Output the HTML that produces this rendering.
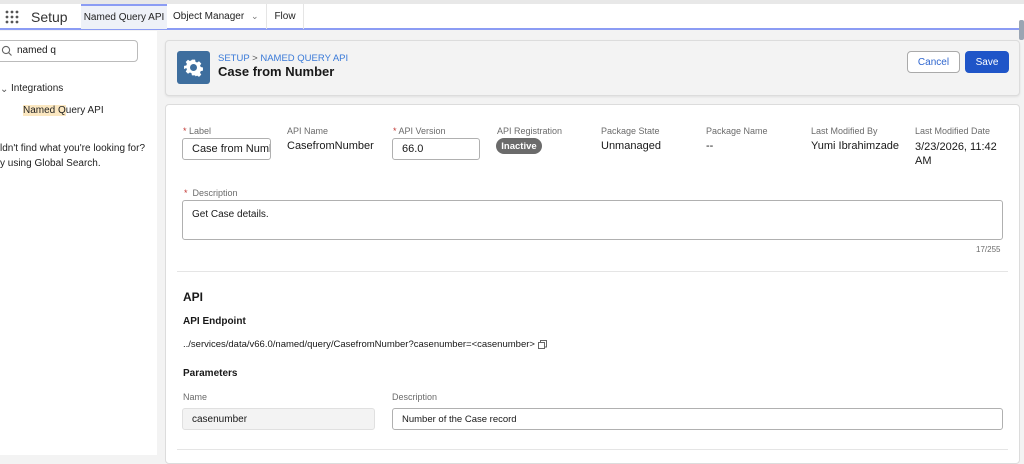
<!DOCTYPE html>
<html><head><meta charset="utf-8"><style>
*{box-sizing:border-box;margin:0;padding:0}
body{width:1024px;height:455px;overflow:hidden;background:#f3f3f3;font-family:"Liberation Sans",Arial,sans-serif;color:#181818;position:relative}
.abs{position:absolute}
.lbl{font-size:9px;color:#6b6b6b;position:absolute}
.val{font-size:11px;position:absolute;color:#181818}
.inp{position:absolute;border:1px solid #b0b0b0;border-radius:3px;background:#fff;font-size:11px;padding-left:9px;display:flex;align-items:center;white-space:nowrap;overflow:hidden}
.req{color:#c23934}
.c{display:flex;align-items:center;justify-content:center}
</style></head><body>
<div class="abs" style="left:0;top:0;width:1024px;height:4px;background:#e8e8e8"></div>
<div class="abs" style="left:0;top:4px;width:1024px;height:26px;background:#fff;border-bottom:2px solid #8b9cf4"></div>
<svg class="abs" style="left:5px;top:10px" width="14" height="14"><g fill="#555"><circle cx="2" cy="2" r="1.4"/><circle cx="7" cy="2" r="1.4"/><circle cx="12" cy="2" r="1.4"/><circle cx="2" cy="7" r="1.4"/><circle cx="7" cy="7" r="1.4"/><circle cx="12" cy="7" r="1.4"/><circle cx="2" cy="12" r="1.4"/><circle cx="7" cy="12" r="1.4"/><circle cx="12" cy="12" r="1.4"/></g></svg>
<div class="abs" style="left:31px;top:9px;font-size:14px;color:#333">Setup</div>
<div class="abs c" style="left:81px;top:4px;width:86px;height:25px;background:#eef1f8;border-top:2px solid #8b9cf4;font-size:10px;color:#222">Named Query API</div>
<div class="abs" style="left:167px;top:4px;width:100px;height:25px;border-right:1px solid #e5e5e5;font-size:10px;padding-left:6px;line-height:25px;color:#222">Object Manager <span style="color:#777;font-size:9px;margin-left:4px">&#8964;</span></div>
<div class="abs c" style="left:267px;top:4px;width:37px;height:25px;border-right:1px solid #e5e5e5;font-size:10px;color:#222">Flow</div>
<div class="abs" style="left:1019px;top:20px;width:5px;height:20px;background:#9aa5b3;border-radius:2px"></div>
<!-- sidebar -->
<div class="abs" style="left:0;top:31px;width:157px;height:424px;background:#fff"></div>
<div class="abs" style="left:-4px;top:40px;width:142px;height:22px;border:1px solid #bbb;border-radius:4px;background:#fff"></div>
<svg class="abs" style="left:1px;top:45px" width="11" height="11"><circle cx="5" cy="5" r="3.6" fill="none" stroke="#666" stroke-width="1.1"/><line x1="7.6" y1="7.6" x2="10.5" y2="10.5" stroke="#666" stroke-width="1.1"/></svg>
<div class="abs" style="left:17px;top:45px;font-size:10px">named q</div>
<div class="abs" style="left:0;top:84px;font-size:10px;color:#555">&#8964;</div>
<div class="abs" style="left:11px;top:83px;font-size:10px;color:#222">Integrations</div>
<div class="abs" style="left:23px;top:105px;font-size:10px;color:#222"><span style="background:#fbe7c0">Named Q</span>uery API</div>
<div class="abs" style="left:0;top:141px;font-size:10px;line-height:15px;color:#222;white-space:nowrap">ldn't find what you're looking for?<br>y using Global Search.</div>
<!-- header card -->
<div class="abs" style="left:165px;top:40px;width:855px;height:56px;background:#f3f3f3;border:1px solid #dcdcdc;border-radius:4px;box-shadow:0 1px 2px rgba(0,0,0,.08)"></div>
<div class="abs" style="left:177px;top:51px;width:33px;height:33px;background:#3e6e9e;border-radius:3px"></div>
<svg class="abs" style="left:183px;top:57px" width="21" height="21" viewBox="0 0 24 24"><path fill="#fff" d="M10 2h4l.6 2.8 2 .9 2.4-1.6 2.9 2.9-1.6 2.4.9 2 2.8.6v4l-2.8.6-.9 2 1.6 2.4-2.9 2.9-2.4-1.6-2 .9L14 22h-4l-.6-2.8-2-.9-2.4 1.6-2.9-2.9 1.6-2.4-.9-2L0 14v-4l2.8-.6.9-2L2.1 5l2.9-2.9 2.4 1.6 2-.9z" transform="translate(1.2 1.2) scale(.9)"/><circle cx="12" cy="12" r="4" fill="#3e6e9e"/></svg>
<div class="abs" style="left:218px;top:53px;font-size:9.5px;color:#3a7ad8">SETUP <span style="color:#555">&gt;</span> NAMED QUERY API</div>
<div class="abs" style="left:218px;top:64px;font-size:13px;font-weight:bold">Case from Number</div>
<div class="abs c" style="left:907px;top:51px;width:53px;height:22px;border:1px solid #aaa;border-radius:4px;background:#fff;color:#2f66cf;font-size:10px">Cancel</div>
<div class="abs c" style="left:965px;top:51px;width:44px;height:22px;border-radius:4px;background:#1f55c8;color:#fff;font-size:10px">Save</div>
<!-- content card -->
<div class="abs" style="left:165px;top:104px;width:855px;height:360px;background:#fff;border:1px solid #dcdcdc;border-radius:4px"></div>
<div class="lbl" style="left:183px;top:126px"><span class="req">*</span> Label</div>
<div class="inp" style="left:182px;top:138px;width:89px;height:22px">Case from Numb</div>
<div class="lbl" style="left:287px;top:126px">API Name</div>
<div class="val" style="left:287px;top:140px">CasefromNumber</div>
<div class="lbl" style="left:393px;top:126px"><span class="req">*</span> API Version</div>
<div class="inp" style="left:392px;top:138px;width:88px;height:22px">66.0</div>
<div class="lbl" style="left:497px;top:126px">API Registration</div>
<div class="abs c" style="left:496px;top:138px;width:46px;height:16px;border-radius:8px;background:#6b6b6b;color:#fff;font-size:9.5px;font-weight:bold">Inactive</div>
<div class="lbl" style="left:601px;top:126px">Package State</div>
<div class="val" style="left:601px;top:140px">Unmanaged</div>
<div class="lbl" style="left:706px;top:126px">Package Name</div>
<div class="val" style="left:706px;top:140px">--</div>
<div class="lbl" style="left:811px;top:126px">Last Modified By</div>
<div class="val" style="left:811px;top:140px">Yumi Ibrahimzade</div>
<div class="lbl" style="left:915px;top:126px">Last Modified Date</div>
<div class="val" style="left:915px;top:140px;line-height:14px">3/23/2026, 11:42<br>AM</div>
<div class="lbl" style="left:184px;top:188px"><span class="req">*</span>&nbsp; Description</div>
<div class="inp" style="left:182px;top:200px;width:821px;height:40px;align-items:flex-start;padding-top:8px;font-size:10px">Get Case details.</div>
<div class="lbl" style="left:976px;top:245px;font-size:8px">17/255</div>
<div class="abs" style="left:177px;top:271px;width:831px;height:1px;background:#e5e5e5"></div>
<div class="abs" style="left:183px;top:290px;font-size:12px;font-weight:bold">API</div>
<div class="abs" style="left:183px;top:316px;font-size:10px;font-weight:bold">API Endpoint</div>
<div class="abs" style="left:183px;top:339px;font-size:9.5px">../services/data/v66.0/named/query/CasefromNumber?casenumber=&lt;casenumber&gt;</div>
<svg class="abs" style="left:538px;top:340px" width="9" height="9"><rect x="2.5" y=".5" width="6" height="6.5" fill="none" stroke="#666"/><rect x=".5" y="2.5" width="6" height="6" fill="#fff" stroke="#666"/></svg>
<div class="abs" style="left:183px;top:368px;font-size:10px;font-weight:bold">Parameters</div>
<div class="lbl" style="left:183px;top:392px">Name</div>
<div class="lbl" style="left:392px;top:392px">Description</div>
<div class="inp" style="left:182px;top:408px;width:193px;height:22px;background:#f3f3f3;border-color:#e0e0e0;font-size:10px">casenumber</div>
<div class="inp" style="left:392px;top:408px;width:611px;height:22px;font-size:9.5px">Number of the Case record</div>
<div class="abs" style="left:177px;top:449px;width:831px;height:1px;background:#e5e5e5"></div>
</body></html>
